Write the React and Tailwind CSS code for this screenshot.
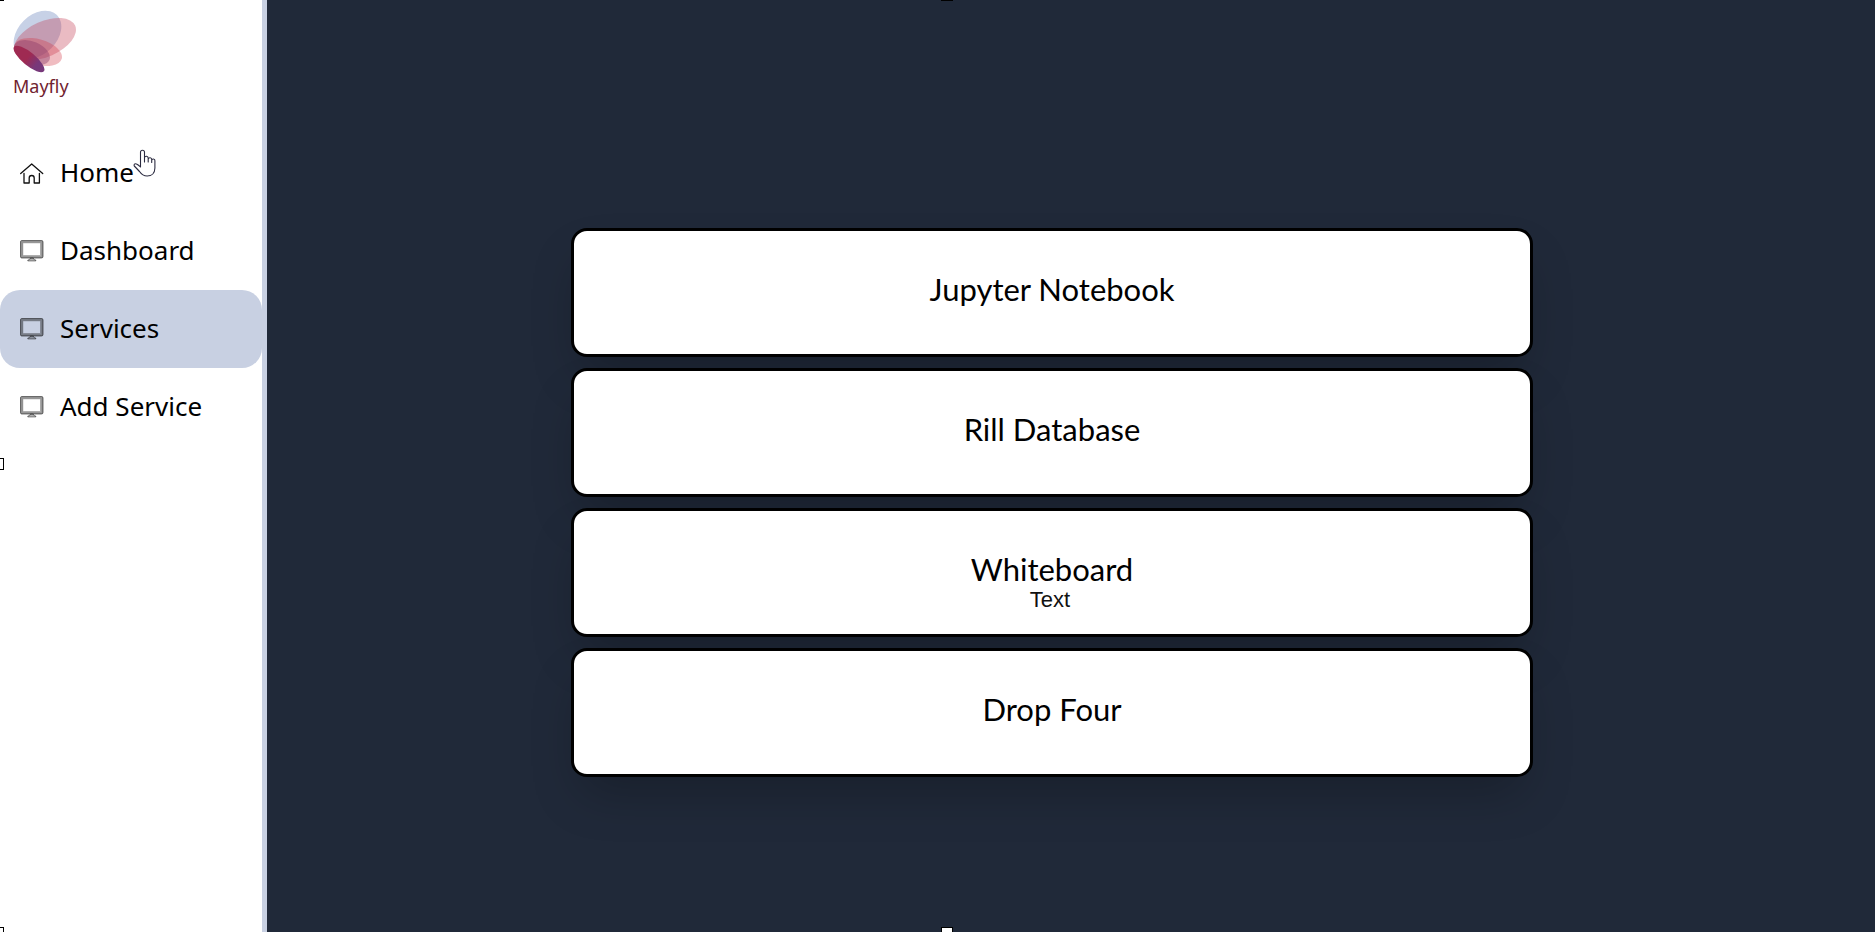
const navItems = [
  { label: 'Home', icon: HomeIcon },
  { label: 'Dashboard', icon: MonitorIcon },
  { label: 'Services', icon: MonitorIcon, active: true },
  { label: 'Add Service', icon: MonitorIcon },
];

const services = [
  { name: 'Jupyter Notebook' },
  { name: 'Rill Database' },
  { name: 'Whiteboard', note: 'Text' },
  { name: 'Drop Four' },
];

function Logo() {
  return (
    <svg className="h-[64px] w-[64px]" viewBox="13 10 64 64" aria-hidden="true">
      <defs>
        <linearGradient id="wing" x1="0" y1="0" x2="1" y2="0">
          <stop offset="0.45" stopColor="#9f2a52" />
          <stop offset="0.75" stopColor="#77387a" />
        </linearGradient>
      </defs>
      <ellipse cx="37.5" cy="34.5" rx="27.5" ry="19.5" transform="rotate(-45 37.5 34.5)" fill="#c7d1e6" />
      <ellipse cx="45" cy="39" rx="33" ry="17.7" transform="rotate(-24 45 39)" fill="#c0304a" fillOpacity="0.33" />
      <ellipse cx="38" cy="52" rx="24.7" ry="12.7" transform="rotate(16 38 52)" fill="#d0303f" fillOpacity="0.32" />
      <ellipse cx="32" cy="52.5" rx="19" ry="10.8" transform="rotate(23.5 32 52.5)" fill="#8a3a68" fillOpacity="0.42" />
      <ellipse cx="29" cy="59" rx="19.3" ry="6.5" transform="rotate(39.5 29 59)" fill="url(#wing)" />
    </svg>
  );
}

function HomeIcon() {
  return (
    <svg className="h-6 w-6 shrink-0" viewBox="0 0 24 24" fill="none" stroke="#111" strokeWidth="1.3" strokeLinecap="round" strokeLinejoin="round" aria-hidden="true">
      <path d="M0.700 12.500 11.700 3 22.700 12.500" />
      <path d="M4 12.500V22h5.200v-5a2.500 2.500 0 0 1 5 0v5h5.200v-9.500" />
    </svg>
  );
}

function MonitorIcon() {
  return (
    <svg className="h-6 w-6 shrink-0" viewBox="0 0 24 24" fill="none" aria-hidden="true">
      <rect x="1.500" y="2.500" width="20.500" height="15.500" rx="0.8" stroke="#000" strokeOpacity="0.4" strokeWidth="2.600" />
      <rect x="0.600" y="1.600" width="22.300" height="17.300" rx="1" stroke="#000" strokeOpacity="0.5" strokeWidth="0.9" />
      <rect x="2.900" y="3.900" width="17.700" height="12.700" stroke="#000" strokeOpacity="0.35" strokeWidth="0.7" />
      <path d="M10.300 19h3l.5 1.400 2 .6v1H7.800v-1l2-.6z" fill="#000" fillOpacity="0.3" stroke="#000" strokeOpacity="0.5" strokeWidth="0.8" />
    </svg>
  );
}

function HandCursor() {
  return (
    <svg className="pointer-events-none absolute left-[133px] top-[15px] h-7 w-6" viewBox="0 0 24 28" fill="#fff" stroke="#2b2b40" strokeWidth="1.100" strokeLinejoin="round" strokeLinecap="round" aria-hidden="true">
      <path d="M7.500 18V3.200a2 2 0 0 1 4 0V13v-4.500a1.900 1.900 0 0 1 3.700.5V13v-3a1.800 1.800 0 0 1 3.500.5V13.500v-2a1.600 1.600 0 0 1 3.200.3V19c0 5-3.200 8-7.700 8-3.500 0-5.700-1.500-7.700-4.500L1.300 17c-.8-1.500.5-2.900 2.200-2 1.700.8 2.800 1.900 4 3z" />
    </svg>
  );
}

export default function App() {
  return (
    <div className="relative flex min-h-screen overflow-hidden bg-[#202939] text-black">
      <aside className="w-[267px] shrink-0 border-r-[5px] border-[#c8d0e2] bg-white font-['Noto_Sans',sans-serif]">
        <a href="#" className="flex h-[134px] flex-col items-start pl-[13px] pt-[10px] text-[#712330]">
          <Logo />
          <span className="text-[18px] leading-6">Mayfly</span>
        </a>
        <nav className="relative">
          {navItems.map(({ label, icon: Icon, active }) => (
            <a
              key={label}
              href="#"
              aria-current={active ? 'page' : undefined}
              className={
                active
                  ? 'flex h-[78px] items-center gap-4 rounded-[20px] bg-[#c8d0e2] pl-5 text-[26px]'
                  : 'flex h-[78px] items-center gap-4 rounded-[20px] pl-5 text-[26px]'
              }
            >
              <Icon />
              <span className="pb-0.5">{label}</span>
            </a>
          ))}
          <HandCursor />
        </nav>
      </aside>

      <main className="flex min-w-0 flex-1 items-center justify-center pr-[38px] pt-[73px]">
        <div className="flex w-[962px] max-w-full flex-col gap-[11px]">
          {services.map(({ name, note }) => (
            <button
              key={name}
              type="button"
              className="relative h-[129px] rounded-2xl border-[3px] border-black bg-white pb-1.5 font-['Lato',sans-serif] text-[31px] shadow-2xl"
            >
              {name}
              {note && (
                <span className="absolute inset-x-0 top-[77px] pr-1 text-center font-['Liberation_Sans',sans-serif] text-[22px] leading-6 text-[#111]">
                  {note}
                </span>
              )}
            </button>
          ))}
        </div>
      </main>

      <span className="absolute left-0 top-0 h-px w-1 bg-black" />
      <span className="absolute left-[941px] top-0 h-px w-3 bg-black" />
      <span className="absolute left-0 top-[458px] h-3 w-1 border border-l-0 border-black bg-white" />
      <span className="absolute bottom-0 left-0 h-[5px] w-1 border border-b-0 border-l-0 border-black bg-white" />
      <span className="absolute bottom-0 left-[941px] h-[5px] w-3 border border-b-0 border-black bg-white" />
    </div>
  );
}
